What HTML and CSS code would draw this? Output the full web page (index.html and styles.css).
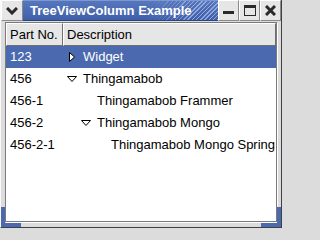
FILE: index.html
```html
<!DOCTYPE html>
<html>
<head>
<meta charset="utf-8">
<link rel="stylesheet" href="styles.css">
</head>
<body>
<div class="window">
  <div class="titlebar">
    <div class="tbtn menu">
      <svg width="12" height="8" viewBox="0 0 12 8"><path d="M1 1 L6 6 L11 1" fill="none" stroke="#2a2a2a" stroke-width="3"/></svg>
    </div>
    <div class="title"><span class="title-text">TreeViewColumn Example</span><span class="stripes"></span></div>
    <div class="tbtn">
      <svg width="11" height="11" viewBox="0 0 11 11"><rect x="0" y="6" width="11" height="3" fill="#2a2a2a"/></svg>
    </div>
    <div class="tbtn">
      <svg width="12" height="11" viewBox="0 0 12 11"><rect x="0.5" y="0.5" width="11" height="10" fill="none" stroke="#2a2a2a"/><rect x="0" y="0" width="12" height="3" fill="#2a2a2a"/></svg>
    </div>
    <div class="tbtn">
      <svg width="11" height="11" viewBox="0 0 11 11"><path d="M1 1 L10 10 M10 1 L1 10" stroke="#2a2a2a" stroke-width="3"/></svg>
    </div>
  </div>
  <div class="client">
    <div class="tree">
      <div class="header">
        <div class="hcell c1">Part No.</div>
        <div class="hcell c2">Description</div>
      </div>
      <div class="row sel">
        <div class="c1">123</div>
        <div class="c2 l0"><span class="exp"><svg width="8" height="10" viewBox="0 0 8 10"><path d="M1.5 0.5 L6.5 5 L1.5 9.5 Z" fill="#fff" stroke="#000"/></svg></span>Widget</div>
      </div>
      <div class="row">
        <div class="c1">456</div>
        <div class="c2 l0"><span class="exp"><svg width="10" height="7" viewBox="0 0 10 7"><path d="M0.5 0.5 L9.5 0.5 L5 5.5 Z" fill="#fff" stroke="#000"/></svg></span>Thingamabob</div>
      </div>
      <div class="row">
        <div class="c1">456-1</div>
        <div class="c2 l1"><span class="exp"></span>Thingamabob Frammer</div>
      </div>
      <div class="row">
        <div class="c1">456-2</div>
        <div class="c2 l1"><span class="exp"><svg width="10" height="7" viewBox="0 0 10 7"><path d="M0.5 0.5 L9.5 0.5 L5 5.5 Z" fill="#fff" stroke="#000"/></svg></span>Thingamabob Mongo</div>
      </div>
      <div class="row">
        <div class="c1">456-2-1</div>
        <div class="c2 l2"><span class="exp"></span>Thingamabob Mongo Spring</div>
      </div>
    </div>
  </div>
  <span class="corner bl"></span>
  <span class="corner br"></span>
</div>
</body>
</html>
```

FILE: styles.css
```css
html, body {
  margin: 0;
  padding: 0;
  background: #dcdcdc;
}
.window {
  position: relative;
  width: 282px;
  height: 228px;
  box-sizing: border-box;
  background: #dcdcdc;
  border-left: 1px solid #fafafa;
  border-right: 1px solid #404040;
  border-bottom: 1px solid #404040;
  font-family: "Liberation Sans", Arial, sans-serif;
  font-size: 13px;
  color: #000;
  overflow: hidden;
}
.titlebar {
  display: flex;
  height: 21px;
}
.tbtn {
  width: 19px;
  height: 19px;
  background: #e6e6e6;
  border-top: 1px solid #ffffff;
  border-left: 1px solid #ffffff;
  border-right: 1px solid #8a8a8a;
  border-bottom: 1px solid #8a8a8a;
  display: flex;
  align-items: center;
  justify-content: center;
  flex: none;
}
.tbtn.menu {
  width: 20px;
}
.title {
  flex: 1;
  position: relative;
  background: linear-gradient(#5677bd, #3f5fa8);
  border-top: 1px solid #7e97cf;
  border-bottom: 1px solid #2c447c;
  display: flex;
  align-items: center;
  overflow: hidden;
}
.title-text {
  position: relative;
  z-index: 1;
  color: #fff;
  font-weight: bold;
  font-size: 13px;
  padding-left: 7px;
  white-space: nowrap;
}
.stripes {
  position: absolute;
  right: 0;
  top: 0;
  bottom: 0;
  width: 70px;
  background: repeating-linear-gradient(135deg, transparent 0 2px, rgba(170,190,235,0.75) 2px 3px);
  -webkit-mask-image: linear-gradient(90deg, transparent, #000 60%);
  mask-image: linear-gradient(90deg, transparent, #000 60%);
}
.client {
  padding: 1px 4px 0 4px;
}
.tree {
  height: 198px;
  background: #fff;
  border: 1px solid #7a7a7a;
  box-shadow: 1px 1px 0 #ffffff;
}
.header {
  display: flex;
  height: 23px;
}
.hcell {
  box-sizing: border-box;
  background: #e6e6e6;
  border-top: 1px solid #fff;
  border-left: 1px solid #fff;
  border-right: 1px solid #6e6e6e;
  border-bottom: 1px solid #6e6e6e;
  padding-left: 3px;
  line-height: 21px;
  white-space: nowrap;
}
.hcell.c1 { width: 57px; }
.hcell.c2 { flex: 1; }
.row {
  display: flex;
  height: 22px;
  line-height: 22px;
  white-space: nowrap;
}
.row.sel {
  background: #4b69ae;
  color: #fff;
}
.row .c1 {
  width: 57px;
  padding-left: 4px;
  box-sizing: border-box;
}
.row .c2 {
  display: flex;
  align-items: center;
  flex: 1;
}
.exp {
  width: 15px;
  display: inline-flex;
  align-items: center;
  justify-content: center;
  margin-right: 4px;
  flex: none;
}
.l0 { padding-left: 1px; }
.l1 { padding-left: 15px; }
.l2 { padding-left: 29px; }
.corner {
  position: absolute;
  background: #4b69ae;
}
.corner.bl {
  left: 0;
  bottom: 0;
  width: 20px;
  height: 20px;
  background:
    linear-gradient(#4b69ae, #4b69ae) left bottom / 4px 20px no-repeat,
    linear-gradient(#4b69ae, #4b69ae) left bottom / 20px 4px no-repeat;
}
.corner.br {
  right: 0;
  bottom: 0;
  width: 20px;
  height: 20px;
  background:
    linear-gradient(#4b69ae, #4b69ae) right bottom / 4px 20px no-repeat,
    linear-gradient(#4b69ae, #4b69ae) right bottom / 20px 4px no-repeat;
}
```
